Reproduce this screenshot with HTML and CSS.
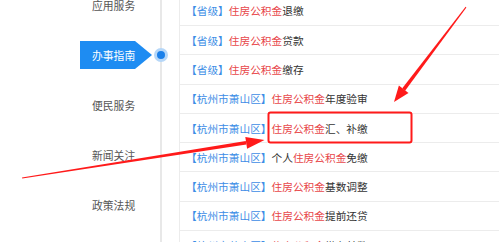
FILE: index.html
```html
<!DOCTYPE html>
<html lang="zh-CN">
<head>
  <meta charset="UTF-8">
  <title>办事指南</title>
  <link rel="stylesheet" href="styles.css">
</head>
<body>
  <div class="page">
    <div class="side">
      <div class="nav-item">应用服务</div>
      <div class="nav-item"><span class="tab">办事指南</span></div>
      <div class="nav-item">便民服务</div>
      <div class="nav-item">新闻关注</div>
      <div class="nav-item">政策法规</div>
    </div>

    <div class="rail"><span class="dot"></span></div>

    <ul class="list">
      <li><span class="tag">【省级】</span><span class="hl">住房公积金</span>退缴</li>
      <li><span class="tag">【省级】</span><span class="hl">住房公积金</span>贷款</li>
      <li><span class="tag">【省级】</span><span class="hl">住房公积金</span>缴存</li>
      <li><span class="tag">【杭州市萧山区】</span><span class="hl">住房公积金</span>年度验审</li>
      <li><span class="tag">【杭州市萧山区】</span><span class="hl">住房公积金</span>汇、补缴</li>
      <li><span class="tag">【杭州市萧山区】</span>个人<span class="hl">住房公积金</span>免缴</li>
      <li><span class="tag">【杭州市萧山区】</span><span class="hl">住房公积金</span>基数调整</li>
      <li><span class="tag">【杭州市萧山区】</span><span class="hl">住房公积金</span>提前还贷</li>
      <li><span class="tag">【杭州市萧山区】</span><span class="hl">住房公积金</span>缴存基数</li>
    </ul>

    <!-- 标注 -->
    <svg class="marks" width="499" height="242" viewBox="0 0 499 242">
      <rect x="268.5" y="112.5" width="143" height="30" rx="2" fill="none" stroke="#ff1a1a" stroke-width="2"/>
      <polygon fill="#ff1a1a" points="465.6,6.8 466.4,7.4 405.1,90.7 402.3,88.3"/>
      <polygon fill="#ff1a1a" points="394,102 408.5,92.9 398.9,85.6"/>
      <polygon fill="#ff1a1a" points="22,177.6 22.2,178.6 246.4,144.6 245.8,141"/>
      <polygon fill="#ff1a1a" points="264.5,140 247.1,148.7 245.3,136.9"/>
    </svg>
  </div>
</body>
</html>
```

FILE: styles.css
```css
body { margin: 0; background: #fff; font-family: "Noto Sans CJK SC", "Noto Sans", sans-serif; overflow: hidden; }

.page {
  position: relative;
  display: flex;
  width: 499px;
  height: 242px;
  overflow: hidden;
}

.side {
  width: 160px;
  margin-top: -20px;
  display: flex;
  flex-direction: column;
}
.nav-item {
  height: 50px;
  flex-shrink: 0;
  display: flex;
  align-items: center;
  padding-left: 92px;
  font-size: 10.8px;
  color: #555;
}
.tab {
  margin-left: -12px;
  width: 72px;
  height: 28px;
  padding-left: 12px;
  box-sizing: border-box;
  display: flex;
  align-items: center;
  background: #1e8cf2;
  color: #fff;
  clip-path: polygon(0 0, 55px 0, 100% 50%, 55px 100%, 0 100%);
}

.rail {
  position: relative;
  width: 2px;
  background: #e8e8e8;
}
.dot {
  position: absolute;
  left: -6px;
  top: 48px;
  width: 8px;
  height: 8px;
  border-radius: 50%;
  background: #1a80ea;
  border: 3px solid #b6d7f8;
}

.list {
  list-style: none;
  margin: -3.3px 0 0 17px;
  padding: 0;
  flex: 1;
  border-left: 1px solid #ececec;
}
.list li {
  height: 28.3px;
  border-bottom: 1px solid #ececec;
  display: flex;
  align-items: center;
  padding-left: 6px;
  font-size: 10.7px;
  color: #333;
  white-space: nowrap;
}
.tag { color: #3d8de6; }
.hl { color: #e8474a; }

.marks {
  position: absolute;
  left: 0;
  top: 0;
  pointer-events: none;
}
```
